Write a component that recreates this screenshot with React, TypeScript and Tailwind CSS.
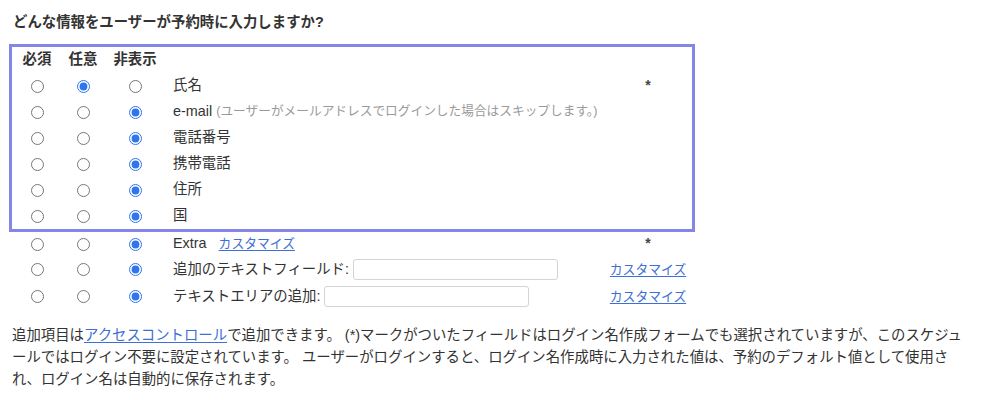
import * as React from "react"

type Choice = "req" | "opt" | "hide"

interface FieldRow {
  key: string
  value: Choice
  label: React.ReactNode
  right?: React.ReactNode
  height: string
}

const Radio = ({ name, checked }: { name: string; checked: boolean }) => (
  <input
    type="radio"
    name={name}
    defaultChecked={checked}
    className="m-0 h-[13px] w-[13px] accent-[#2f76ee]"
  />
)

const Link = ({ children }: { children: React.ReactNode }) => (
  <a href="#" className="whitespace-nowrap text-[12.8px] text-[#3d6fd6] underline underline-offset-2">
    {children}
  </a>
)

const Row = ({ row }: { row: FieldRow }) => (
  <div className={`flex items-center ${row.height}`}>
    <div className="flex w-[50px] shrink-0 justify-center">
      <Radio name={row.key} checked={row.value === "req"} />
    </div>
    <div className="flex w-[42px] shrink-0 justify-center">
      <Radio name={row.key} checked={row.value === "opt"} />
    </div>
    <div className="flex w-[62px] shrink-0 justify-center">
      <Radio name={row.key} checked={row.value === "hide"} />
    </div>
    <div className="flex min-w-0 flex-1 items-center whitespace-nowrap pl-[7px] text-[14.4px] text-[#333]">
      {row.label}
    </div>
    <div className="mr-[4px] flex w-[80px] shrink-0 justify-center text-[14px] text-[#333]">{row.right}</div>
  </div>
)

const Asterisk = () => (
  <span className="-mt-[2px] text-[14px] font-bold leading-none text-[#444]">*</span>
)

const TextInput = () => (
  <input
    type="text"
    className="ml-[4px] h-[21px] w-[205px] shrink-0 rounded-[3px] border border-[#d4d4d4] bg-white"
  />
)

const boxed: FieldRow[] = [
  { key: "name", value: "opt", label: "氏名", right: <Asterisk />, height: "h-[26px]" },
  {
    key: "email",
    value: "hide",
    label: (
      <>
        <span>e-mail</span>
        <span className="ml-[4px] text-[12.7px] text-[#9a9a9a]">
          (ユーザーがメールアドレスでログインした場合はスキップします。)
        </span>
      </>
    ),
    height: "h-[26px]",
  },
  { key: "tel", value: "hide", label: "電話番号", height: "h-[26px]" },
  { key: "mobile", value: "hide", label: "携帯電話", height: "h-[26px]" },
  { key: "address", value: "hide", label: "住所", height: "h-[26px]" },
  { key: "country", value: "hide", label: "国", height: "h-[26px]" },
]

const extra: FieldRow[] = [
  {
    key: "extra",
    value: "hide",
    label: (
      <>
        <span>Extra</span>
        <span className="ml-[12px]">
          <Link>カスタマイズ</Link>
        </span>
      </>
    ),
    right: <Asterisk />,
    height: "h-[24px]",
  },
  {
    key: "textfield",
    value: "hide",
    label: (
      <>
        <span>追加のテキストフィールド:</span>
        <TextInput />
      </>
    ),
    right: <Link>カスタマイズ</Link>,
    height: "h-[27px]",
  },
  {
    key: "textarea",
    value: "hide",
    label: (
      <>
        <span>テキストエリアの追加:</span>
        <TextInput />
      </>
    ),
    right: <Link>カスタマイズ</Link>,
    height: "h-[27px]",
  },
]

export default function App() {
  return (
    <div
      className="min-h-[400px] w-[984px] bg-white pt-[12px] text-[#333]"
      style={{ fontFamily: '"Liberation Sans", "Noto Sans CJK JP", sans-serif' }}
    >
      <h2 className="pl-[13px] text-[14.4px] font-bold leading-[20px] text-[#333]">
        どんな情報をユーザーが予約時に入力しますか?
      </h2>

      <div className="ml-[9px] mt-[12px] w-[686px]">
        <div className="border-[3px] border-[#8585e8]">
          <div className="flex h-[26px] items-center text-[14.4px] font-bold text-[#333]">
            <div className="w-[50px] text-center">必須</div>
            <div className="w-[42px] text-center">任意</div>
            <div className="w-[62px] text-center">非表示</div>
          </div>
          {boxed.map((row) => (
            <Row key={row.key} row={row} />
          ))}
        </div>
        <div className="px-[3px]">
          {extra.map((row) => (
            <Row key={row.key} row={row} />
          ))}
        </div>
      </div>

      <p className="mt-[14px] w-[972px] pl-[12px] text-[14.4px] leading-[22px] text-[#333]">
        追加項目は<a href="#" className="text-[#3d6fd6] underline underline-offset-2">アクセスコントロール</a>で追加できます。 (*)マークがついたフィールドはログイン名作成フォームでも選択されていますが、このスケジュールではログイン不要に設定されています。
        ユーザーがログインすると、ログイン名作成時に入力された値は、予約のデフォルト値として使用され、ログイン名は自動的に保存されます。
      </p>
    </div>
  )
}
